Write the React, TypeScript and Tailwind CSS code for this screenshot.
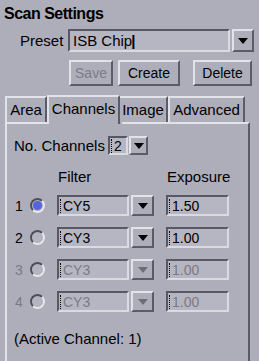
import React from "react";

const Raised = ({ className = "", children }: { className?: string; children?: React.ReactNode }) => (
  <div
    className={`border-2 border-t-[#e2e2ea] border-l-[#e2e2ea] border-b-[#5c5c68] border-r-[#5c5c68] flex items-center justify-center shrink-0 ${className}`}
  >
    {children}
  </div>
);

const Arrow = ({ disabled = false }: { disabled?: boolean }) => (
  <svg width="10" height="6" viewBox="0 0 10 6">
    <polygon points="0,0 10,0 5,6" fill={disabled ? "#6e6e7a" : "#000"} />
  </svg>
);

const DropBtn = ({ disabled = false, className = "" }: { disabled?: boolean; className?: string }) => (
  <Raised className={className}>
    <Arrow disabled={disabled} />
  </Raised>
);

const Sunken = ({ className = "", children }: { className?: string; children?: React.ReactNode }) => (
  <div
    className={`border-2 border-t-[#585864] border-l-[#585864] border-b-[#dadae2] border-r-[#dadae2] bg-[#b6b6c2] flex items-center shrink-0 ${className}`}
  >
    {children}
  </div>
);

const Caret = () => <div className="w-[2px] h-[14px] border-l border-dotted border-black mr-[1px] shrink-0" />;

const Radio = ({ on = false }: { on?: boolean }) => (
  <div className="w-[15px] h-[15px] rounded-full border-2 border-t-[#4e4e5a] border-l-[#4e4e5a] border-b-[#e6e6ee] border-r-[#e6e6ee] bg-[#b4b4c0] flex items-center justify-center shrink-0">
    {on && <div className="w-[9px] h-[9px] rounded-full bg-[#5464dc]" />}
  </div>
);

const Row = ({ n, filter, exp, on = false, disabled = false }: { n: string; filter: string; exp: string; on?: boolean; disabled?: boolean }) => {
  const tc = disabled ? "text-[#7a7a86]" : "text-black";
  return (
    <div className="flex items-center h-[21px] mb-[11px]">
      <div className={`w-[15px] ml-[8px] shrink-0 ${tc}`}>{n}</div>
      <Radio on={on} />
      <Sunken className="ml-[12px] w-[72px] h-[21px] pl-[1px]">
        <Caret />
        <span className={tc}>{filter}</span>
      </Sunken>
      <DropBtn disabled={disabled} className="ml-[2px] w-[23px] h-[21px]" />
      <Sunken className="ml-[12px] w-[63px] h-[21px] pl-[1px]">
        <Caret />
        <span className={tc}>{exp}</span>
      </Sunken>
    </div>
  );
};

export default function App() {
  return (
    <div
      className="w-[259px] h-[361px] bg-[#aeaeba] overflow-hidden text-[14px] leading-[16px] text-black"
      style={{ fontFamily: '"Liberation Sans", Arial, sans-serif' }}
    >
      <div className="pt-[4px] pl-[4px] text-[16px] leading-[20px] font-bold tracking-[-0.5px]">Scan Settings</div>
      <div className="flex items-center mt-[5px]">
        <div className="ml-[20px] w-[48px] shrink-0 text-[15px]">Preset</div>
        <Sunken className="w-[162px] h-[23px] pl-[3px] text-[15px]">
          <span>ISB Chip</span>
          <span className="ml-[-1px] font-bold">|</span>
        </Sunken>
        <DropBtn className="ml-[2px] w-[22px] h-[23px]" />
      </div>
      <div className="flex mt-[8px] ml-[69px] text-[14px]">
        <Raised className="w-[44px] h-[26px] text-[#7c7c88]">Save</Raised>
        <Raised className="ml-[5px] w-[62px] h-[26px]">Create</Raised>
        <Raised className="ml-[13px] w-[59px] h-[26px]">Delete</Raised>
      </div>
      <div className="flex items-end mt-[9px] ml-[5px] h-[29px] relative z-10">
        <div className="h-[26px] w-[42px] shrink-0 border-t-2 border-l-2 border-r-2 border-t-[#e2e2ea] border-l-[#e2e2ea] border-r-[#5c5c68] flex items-center justify-center mb-[2px] text-[15px]">
          Area
        </div>
        <div className="h-[29px] w-[73px] shrink-0 border-t-2 border-l-2 border-r-2 border-t-[#e2e2ea] border-l-[#e2e2ea] border-r-[#5c5c68] bg-[#aeaeba] flex items-center justify-center text-[15px] pb-[4px]">
          Channels
        </div>
        <div className="h-[26px] w-[48px] shrink-0 border-t-2 border-r-2 border-t-[#e2e2ea] border-r-[#5c5c68] flex items-center justify-center mb-[2px] text-[15px]">
          Image
        </div>
        <div className="h-[26px] w-[77px] shrink-0 border-t-2 border-l-2 border-r-2 border-t-[#e2e2ea] border-l-[#e2e2ea] border-r-[#5c5c68] flex items-center justify-center mb-[2px] text-[15px]">
          Advanced
        </div>
      </div>
      <div className="ml-[5px] w-[245px] h-[300px] mt-[-2px] border-t-2 border-l-2 border-r-2 border-t-[#e2e2ea] border-l-[#e2e2ea] border-r-[#5c5c68] relative">
        <div className="absolute left-[42px] top-[-2px] w-[73px] h-[2px] bg-[#aeaeba]" />
        <div className="flex items-center mt-[12px] ml-[7px]">
          <div className="w-[94px] shrink-0 text-[15px]">No. Channels</div>
          <Sunken className="w-[20px] h-[19px] pl-[1px]">
            <Caret />
            <span>2</span>
          </Sunken>
          <DropBtn className="ml-[1px] w-[19px] h-[19px]" />
        </div>
        <div className="flex mt-[14px] h-[16px] text-[15px]">
          <div className="ml-[51px] w-[109px] shrink-0">Filter</div>
          <div className="shrink-0">Exposure</div>
        </div>
        <div className="mt-[10px]">
          <Row n="1" filter="CY5" exp="1.50" on />
          <Row n="2" filter="CY3" exp="1.00" />
          <Row n="3" filter="CY3" exp="1.00" disabled />
          <Row n="4" filter="CY3" exp="1.00" disabled />
        </div>
        <div className="mt-[19px] ml-[7px] text-[15px]">(Active Channel: 1)</div>
      </div>
    </div>
  );
}
